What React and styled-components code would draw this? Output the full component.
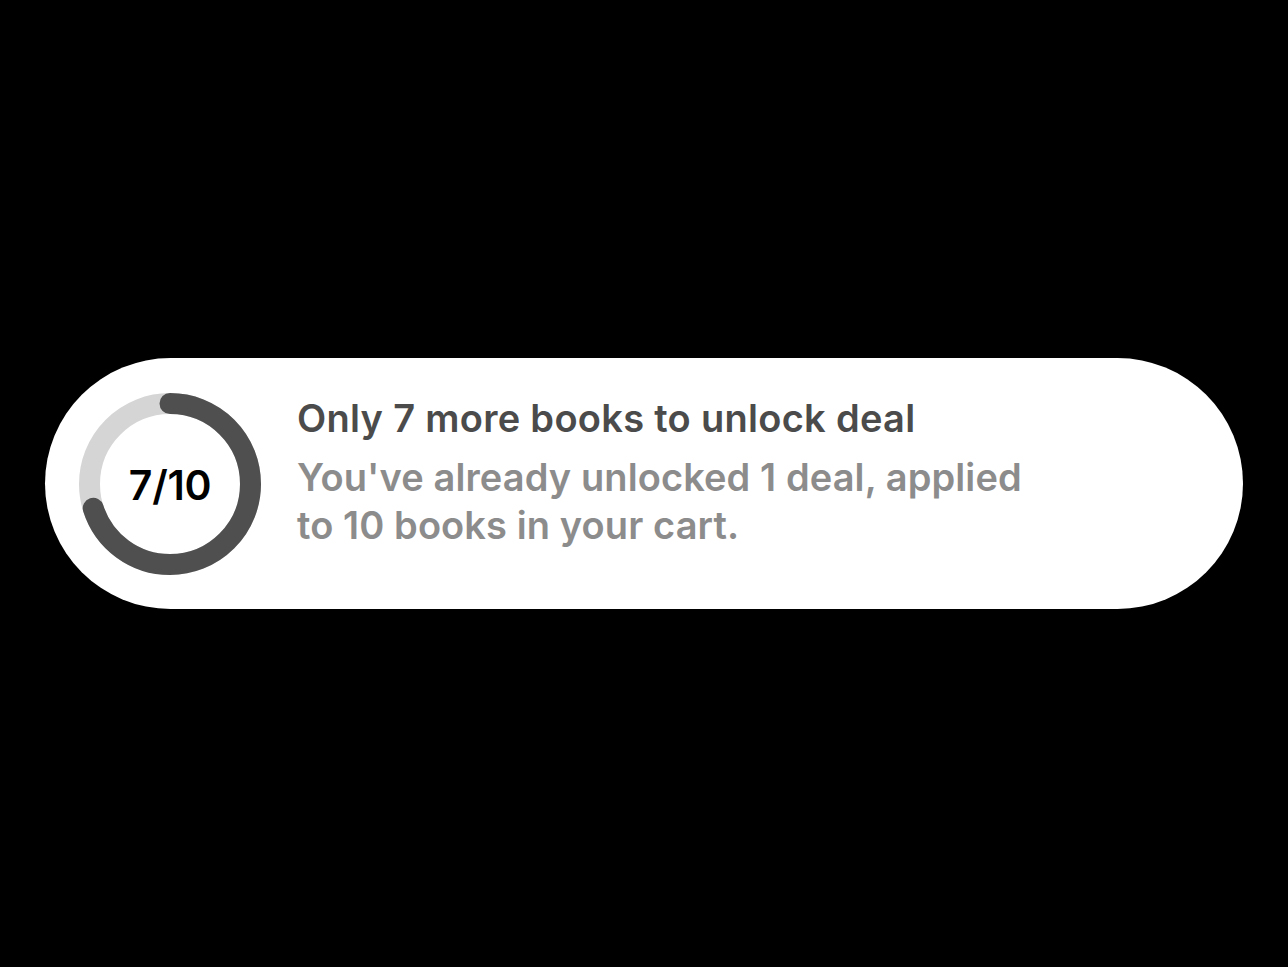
import React from 'react';
import styled, { createGlobalStyle } from 'styled-components';

const GlobalStyle = createGlobalStyle`
  html, body {
    margin: 0;
    padding: 0;
    background: #000;
  }
  body {
    font-family: Inter, "Noto Sans", "Liberation Sans", sans-serif;
  }
`;

const Page = styled.div`
  min-height: 100vh;
  display: flex;
  align-items: center;
  justify-content: center;
  background: #000;
`;

const Banner = styled.div`
  width: 1198px;
  height: 251px;
  box-sizing: border-box;
  background: #fff;
  border-radius: 126px;
  display: flex;
  align-items: center;
  gap: 36px;
  padding-left: 34px;
`;

const RingWrap = styled.div`
  position: relative;
  width: 182px;
  height: 182px;
  flex-shrink: 0;
`;

const RingLabel = styled.span`
  position: absolute;
  inset: 0;
  display: flex;
  align-items: center;
  justify-content: center;
  font-size: 41px;
  font-weight: 600;
  color: #000;
  letter-spacing: -0.3px;
  padding-top: 2px;
`;

const Copy = styled.div`
  display: flex;
  flex-direction: column;
  gap: 10px;
  margin-top: -24px;
`;

const Title = styled.div`
  font-size: 38px;
  line-height: 49px;
  font-weight: 600;
  color: #4b4b4b;
  letter-spacing: 0.3px;
`;

const Subtitle = styled.div`
  font-size: 38px;
  line-height: 48px;
  font-weight: 600;
  color: #8c8c8c;
  letter-spacing: 0.1px;
  max-width: 745px;
`;

const ProgressRing = ({ value, total }) => {
  const size = 182;
  const stroke = 21;
  const r = (size - stroke) / 2;
  const c = 2 * Math.PI * r;
  const filled = (value / total) * c;
  return (
    <RingWrap>
      <svg width={size} height={size} viewBox={`0 0 ${size} ${size}`}>
        <circle cx={size / 2} cy={size / 2} r={r} fill="none" stroke="#d5d5d5" strokeWidth={stroke} />
        <circle
          cx={size / 2}
          cy={size / 2}
          r={r}
          fill="none"
          stroke="#4f4f4f"
          strokeWidth={stroke}
          strokeLinecap="round"
          strokeDasharray={`${filled} ${c}`}
          transform={`rotate(-90 ${size / 2} ${size / 2})`}
        />
      </svg>
      <RingLabel>{value}/{total}</RingLabel>
    </RingWrap>
  );
};

export default function App() {
  return (
    <>
      <GlobalStyle />
      <Page>
        <Banner>
          <ProgressRing value={7} total={10} />
          <Copy>
            <Title>Only 7 more books to unlock deal</Title>
            <Subtitle>You've already unlocked 1 deal, applied to 10 books in your cart.</Subtitle>
          </Copy>
        </Banner>
      </Page>
    </>
  );
}
